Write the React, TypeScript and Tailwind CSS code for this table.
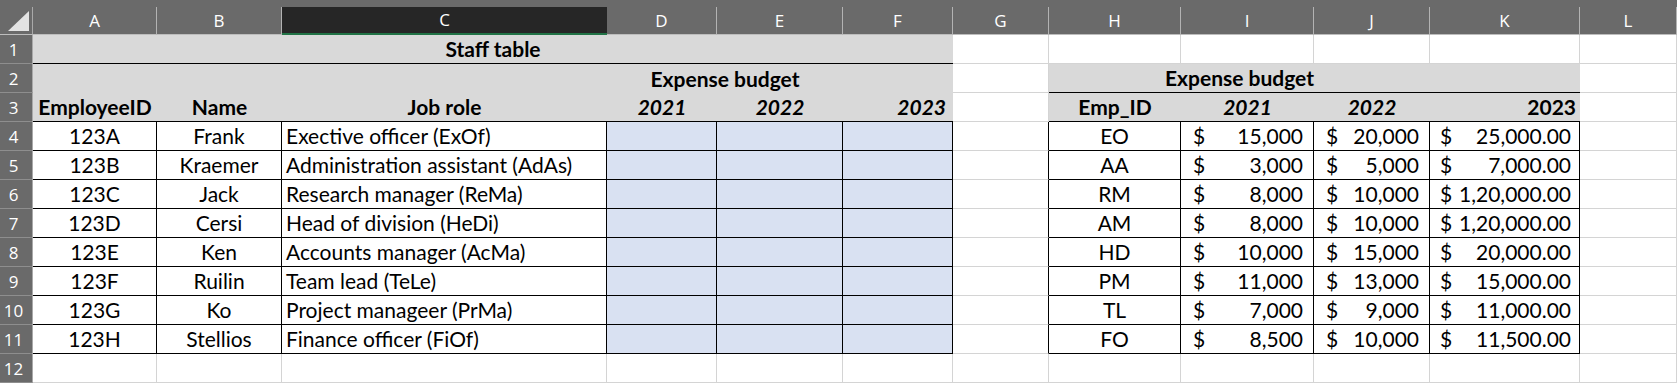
import type { ReactNode } from 'react';

const COLS =
  'grid grid-cols-[33px_124px_125px_325px_110px_126px_110px_96px_132px_133px_116px_150px_97px]';

const LETTERS = ['A', 'B', 'C', 'D', 'E', 'F', 'G', 'H', 'I', 'J', 'K', 'L'];

const STAFF = [
  ['123A', 'Frank', 'Exective officer (ExOf)'],
  ['123B', 'Kraemer', 'Administration assistant (AdAs)'],
  ['123C', 'Jack', 'Research manager (ReMa)'],
  ['123D', 'Cersi', 'Head of division (HeDi)'],
  ['123E', 'Ken', 'Accounts manager (AcMa)'],
  ['123F', 'Ruilin', 'Team lead (TeLe)'],
  ['123G', 'Ko', 'Project manageer (PrMa)'],
  ['123H', 'Stellios', 'Finance officer (FiOf)'],
];

const BUDGET = [
  ['EO', '15,000', '20,000', '25,000.00'],
  ['AA', '3,000', '5,000', '7,000.00'],
  ['RM', '8,000', '10,000', '1,20,000.00'],
  ['AM', '8,000', '10,000', '1,20,000.00'],
  ['HD', '10,000', '15,000', '20,000.00'],
  ['PM', '11,000', '13,000', '15,000.00'],
  ['TL', '7,000', '9,000', '11,000.00'],
  ['FO', '8,500', '10,000', '11,500.00'],
];

// plain white cell with the light sheet gridlines
const grid = 'bg-white border-r border-b border-[#d4d4d4]';
const gray = 'bg-[#d9d9d9]';
const boxed = 'border-r border-b border-black';

function Cell({ className = '', children }: { className?: string; children?: ReactNode }) {
  return <div className={`flex items-end pb-[3px] leading-[22px] whitespace-nowrap overflow-hidden ${className}`}>{children}</div>;
}

function RowHead({ n }: { n: number }) {
  return (
    <div className="flex items-center justify-center pr-[5px] pt-[2px] bg-[#6a6a6a] text-white text-[17px] font-['Open_Sans',sans-serif] border-b border-b-[#8e8e8e] border-r border-r-[#a9a9a9]">
      {n}
    </div>
  );
}

function Money({ v, wide }: { v: string; wide?: boolean }) {
  return (
    <Cell className={`${boxed} justify-between gap-[6px] ${wide ? 'pl-[10px] pr-[8px]' : 'pl-[12px] pr-[10px]'}`}>
      <span>$</span>
      <span>{v}</span>
    </Cell>
  );
}

export default function App() {
  return (
    <div className="w-[1677px] h-[385px] bg-white overflow-hidden font-['Lato',sans-serif] text-[21px] text-black">
      <div className="h-[7px] bg-[#6a6a6a]" />

      {/* column letters */}
      <div className={`${COLS} h-[28px] bg-[#6a6a6a] text-white text-[17px] font-['Open_Sans',sans-serif]`}>
        <div className="relative border-r border-r-[#a9a9a9] border-b border-b-[#bdbdbd]">
          <svg className="absolute left-[8px] top-[4px]" width="22" height="21" viewBox="0 0 22 21">
            <polygon points="0,20 21,20 21,0" fill="#e3e3e3" />
          </svg>
        </div>
        {LETTERS.map((l) =>
          l === 'C' ? (
            <div key={l} className="flex items-center justify-center bg-[#262626] border-b-2 border-b-[#217346]">
              {l}
            </div>
          ) : (
            <div key={l} className="flex items-center justify-center pt-[1px] border-r border-r-[#b3b3b3] border-b border-b-[#bdbdbd]">
              {l}
            </div>
          ),
        )}
      </div>

      {/* row 1 */}
      <div className={`${COLS} h-[29px]`}>
        <RowHead n={1} />
        <Cell className={`col-span-6 ${gray} border-b border-black justify-center font-bold`}>Staff table</Cell>
        <Cell className={grid} />
        <Cell className={grid} />
        <Cell className={grid} />
        <Cell className={grid} />
        <Cell className={grid} />
        <Cell className={grid} />
      </div>

      {/* row 2 */}
      <div className={`${COLS} h-[29px]`}>
        <RowHead n={2} />
        <Cell className={`col-span-3 ${gray}`} />
        <Cell className={`col-span-2 ${gray} justify-center font-bold`}>Expense budget</Cell>
        <Cell className={gray} />
        <Cell className={grid} />
        <Cell className={`col-span-3 ${gray} border-b border-black justify-center font-bold`}>Expense budget</Cell>
        <Cell className={`${gray} border-b border-black`} />
        <Cell className={grid} />
      </div>

      {/* row 3 */}
      <div className={`${COLS} h-[29px]`}>
        <RowHead n={3} />
        <Cell className={`${gray} border-b border-black justify-center font-bold`}>EmployeeID</Cell>
        <Cell className={`${gray} border-b border-black justify-center font-bold`}>Name</Cell>
        <Cell className={`${gray} border-b border-black justify-center font-bold`}>Job role</Cell>
        <Cell className={`${gray} border-b border-black justify-center font-bold italic`}>2021</Cell>
        <Cell className={`${gray} border-b border-black justify-center font-bold italic`}>2022</Cell>
        <Cell className={`${gray} border-b border-black justify-end pr-[7px] font-bold italic`}>2023</Cell>
        <Cell className={grid} />
        <Cell className={`${gray} border-b border-black justify-center font-bold`}>Emp_ID</Cell>
        <Cell className={`${gray} border-b border-black justify-center font-bold italic`}>2021</Cell>
        <Cell className={`${gray} border-b border-black justify-center font-bold italic`}>2022</Cell>
        <Cell className={`${gray} border-b border-black justify-end pr-[4px] font-bold`}>2023</Cell>
        <Cell className={grid} />
      </div>

      {/* rows 4-11 */}
      {STAFF.map((s, i) => {
        const b = BUDGET[i];
        return (
          <div key={s[0]} className={`${COLS} h-[29px]`}>
            <RowHead n={i + 4} />
            <Cell className={`${boxed} justify-center`}>{s[0]}</Cell>
            <Cell className={`${boxed} justify-center`}>{s[1]}</Cell>
            <Cell className={`${boxed} pl-[4px]`}>{s[2]}</Cell>
            <Cell className={`${boxed} bg-[#d9e1f2]`} />
            <Cell className={`${boxed} bg-[#d9e1f2]`} />
            <Cell className={`${boxed} bg-[#d9e1f2]`} />
            <Cell className="bg-white border-b border-b-[#d4d4d4] border-r border-r-black" />
            <Cell className={`${boxed} justify-center`}>{b[0]}</Cell>
            <Money v={b[1]} />
            <Money v={b[2]} />
            <Money v={b[3]} wide />
            <Cell className={grid} />
          </div>
        );
      })}

      {/* row 12 */}
      <div className={`${COLS} h-[29px]`}>
        <RowHead n={12} />
        {LETTERS.map((l) => (
          <Cell key={l} className={grid} />
        ))}
      </div>
    </div>
  );
}
